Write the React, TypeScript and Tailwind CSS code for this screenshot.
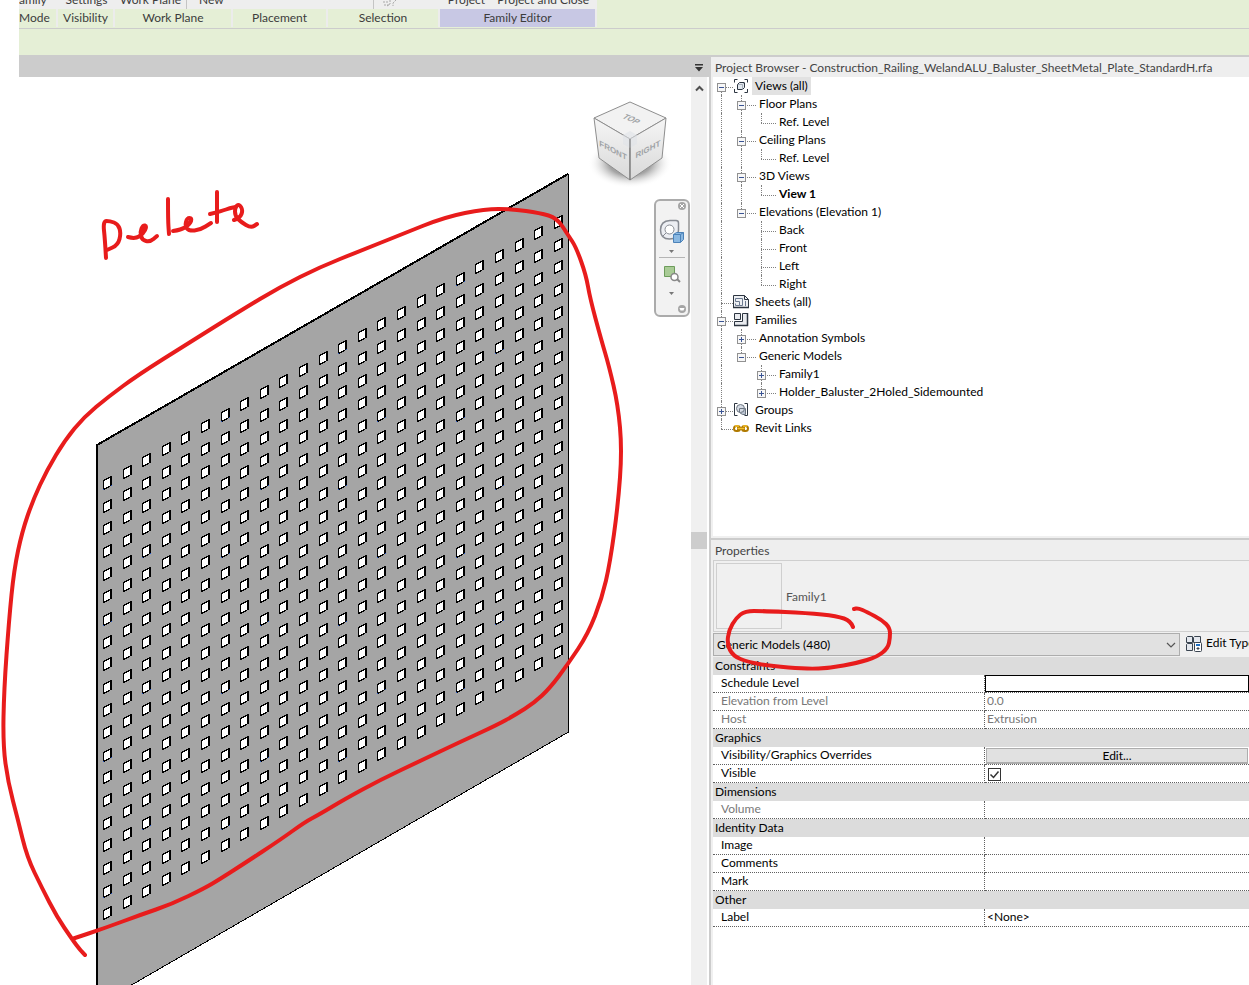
import type { ReactNode } from 'react';
import { useState } from 'react';

type Point = [number, number];

type TreeNode = {
  label: string;
  level: number;
  toggle?: 'open' | 'closed';
  icon?: ReactNode;
  guides?: boolean[];
  first?: boolean;
  last?: boolean;
  selected?: boolean;
  bold?: boolean;
};

type Property = {
  name: string;
  kind?: 'text' | 'input' | 'button' | 'checkbox';
  value?: string;
  readOnly?: boolean;
};

type PropertyGroup = {
  title: string;
  items: Property[];
};

// Runs a smooth curve through the midpoints of a pen stroke
const toPath = (points: Point[]) => {
  let d = `M${points[0][0]} ${points[0][1]}`;
  for (let i = 1; i < points.length - 1; i++) {
    const [x, y] = points[i];
    const [nx, ny] = points[i + 1];
    d += `Q${x} ${y} ${(x + nx) / 2} ${(y + ny) / 2}`;
  }
  const [lx, ly] = points[points.length - 1];
  return `${d}L${lx} ${ly}`;
};

const plateStrokes: Point[][] = [
  // loop round the holes
  [
    [85, 955], [80, 950], [72, 939], [57, 917], [42, 888], [27, 857], [18, 820],
    [8, 782], [3, 745], [4, 690], [9, 620], [14, 570], [22, 532], [33, 500],
    [47, 470], [65, 440], [84, 417], [108, 397], [138, 375], [187, 344],
    [240, 311], [280, 287], [320, 267], [360, 251], [400, 235], [445, 217],
    [485, 209], [512, 209], [540, 213], [557, 218], [568, 235], [576, 247],
    [586, 275], [590, 298], [601, 339], [609, 366], [618, 405], [622, 450],
    [618, 505], [610, 563], [602, 598], [588, 634], [568, 664], [550, 688],
    [534, 703], [515, 715], [497, 725], [460, 742], [420, 761], [380, 780],
    [345, 799], [320, 814], [305, 822], [280, 840], [245, 863], [220, 879],
    [205, 888], [172, 904], [140, 915], [105, 928], [72, 939],
  ],
  // Delete
  [[106, 258], [105, 240], [103, 221], [110, 221], [118, 224], [121, 233], [118, 245], [107, 250]],
  [[128, 237], [135, 239], [143, 234], [147, 226], [143, 225], [140, 232], [142, 240], [150, 242], [157, 236]],
  [[168, 199], [168, 220], [169, 234]],
  [[173, 231], [181, 230], [190, 224], [192, 218], [187, 218], [185, 226], [189, 231], [200, 230], [211, 223]],
  [[217, 192], [217, 210], [217, 222]],
  [[210, 214], [222, 211], [230, 208], [236, 207]],
  [[234, 220], [240, 218], [243, 210], [239, 204], [235, 207], [235, 216], [241, 222], [251, 228], [257, 224]],
];

const countStroke: Point[] = [
  [853, 627], [851, 621], [837, 616], [807, 613], [763, 611], [745, 611],
  [736, 618], [729, 630], [727, 644], [733, 656], [748, 662], [770, 666],
  [807, 669], [830, 668], [857, 663], [877, 657], [888, 648], [890, 638],
  [890, 628], [882, 620], [867, 612], [858, 608], [854, 609],
];

const holes = Array.from({ length: 480 }, (_, i) => {
  const col = i % 24;
  const row = Math.floor(i / 24);
  return {
    x: Math.round(103 + col * 19.6),
    y: Math.round(476 - col * 11.35 + row * 22.65),
    blue: (col * 7 + row * 5 + col * row) % 6 === 0,
  };
});

const ViewsIcon = () => (
  <svg width="16" height="16" viewBox="0 0 16 16" fill="none" stroke="#2c3540">
    <path d="M4.500 1.500h-3v3M11.500 1.500h3v3M1.500 11v3.500h3M14.500 11v3.500h-3" />
    <path d="M4.500 6.500l2-2h5v5l-2 2h-5z" fill="#e2e8ef" />
    <path d="M5 6.500h4.500v5M9.500 6.500l2-2" stroke="#a9b1bb" />
  </svg>
);

const SheetsIcon = () => (
  <svg width="16" height="16" viewBox="0 0 16 16" fill="none">
    <path d="M.5 1.500h11l4 4v8H.5z" fill="#eef0f3" stroke="#2c3540" />
    <path d="M0 13.500h16" stroke="#2c3540" strokeWidth="1.500" />
    <path d="M11.500 1.500v4h4" stroke="#2c3540" />
    <path d="M2.500 4.500h7v7h-3v-4h-4zM2.500 9.500v2h4M12.500 7v5" stroke="#6c7a90" />
  </svg>
);

const FamiliesIcon = () => (
  <svg width="16" height="16" viewBox="0 0 16 16" fill="#e9ebef" stroke="#2c3540">
    <path d="M1.500 1.500h6v6h-6zM9.500 1.500h5v12h-13v-4h8z" />
    <path d="M1 13.500h14M14.500 1v13" strokeWidth="1.500" />
  </svg>
);

const GroupsIcon = () => (
  <svg width="16" height="16" viewBox="0 0 16 16" fill="none" stroke="#2c3540">
    <path d="M4.500 1.500h-3v12h3M11.500 1.500h3v12h-3" />
    <path d="M6.500 6.500h6v6h-3l-3-2z" fill="#b9c2d0" stroke="#6c7682" />
    <circle cx="7.500" cy="6.500" r="4" fill="#d5dbe4" stroke="#6c7682" />
    <path d="M6.500 10v-3.500h4.500" stroke="#6c7682" />
  </svg>
);

const LinksIcon = () => (
  <svg width="16" height="16" viewBox="0 0 16 16" fill="none">
    <rect x="1" y="6" width="6" height="5" rx="2.500" stroke="#b07a00" strokeWidth="2" />
    <rect x="9" y="6" width="6" height="5" rx="2.500" stroke="#b07a00" strokeWidth="2" />
    <path d="M4 8.500h8" stroke="#b07a00" strokeWidth="3" />
    <path d="M2 6h4M10 6h4M4.500 8.500h7" stroke="#f3c02c" strokeWidth="1.500" />
  </svg>
);

const EditTypeIcon = () => (
  <svg width="17" height="17" viewBox="0 0 17 17" fill="#e4e8ee" stroke="#3a4450">
    <path d="M1.500 2.500l1-1h5v6h-6zM8.500 2.500l1-1h6v6h-7zM1.500 9.500l1-1h5v7h-6z" />
    <rect x="9.500" y="7.500" width="7" height="9" rx="1" fill="#fff" />
    <path d="M11 9h4v2h-4z" fill="#1d6fc4" stroke="none" />
    <path d="M11.500 13.500h3M13 12v3" />
  </svg>
);

const treeNodes: TreeNode[] = [
  { label: 'Views (all)', level: 0, toggle: 'open', icon: <ViewsIcon />, first: true, selected: true },
  { label: 'Floor Plans', level: 1, toggle: 'open', guides: [true] },
  { label: 'Ref. Level', level: 2, guides: [true, true], last: true },
  { label: 'Ceiling Plans', level: 1, toggle: 'open', guides: [true] },
  { label: 'Ref. Level', level: 2, guides: [true, true], last: true },
  { label: '3D Views', level: 1, toggle: 'open', guides: [true] },
  { label: 'View 1', level: 2, guides: [true, true], last: true, bold: true },
  { label: 'Elevations (Elevation 1)', level: 1, toggle: 'open', guides: [true], last: true },
  { label: 'Back', level: 2, guides: [true, false] },
  { label: 'Front', level: 2, guides: [true, false] },
  { label: 'Left', level: 2, guides: [true, false] },
  { label: 'Right', level: 2, guides: [true, false], last: true },
  { label: 'Sheets (all)', level: 0, icon: <SheetsIcon /> },
  { label: 'Families', level: 0, toggle: 'open', icon: <FamiliesIcon /> },
  { label: 'Annotation Symbols', level: 1, toggle: 'closed', guides: [true] },
  { label: 'Generic Models', level: 1, toggle: 'open', guides: [true], last: true },
  { label: 'Family1', level: 2, toggle: 'closed', guides: [true, false] },
  { label: 'Holder_Baluster_2Holed_Sidemounted', level: 2, toggle: 'closed', guides: [true, false], last: true },
  { label: 'Groups', level: 0, toggle: 'closed', icon: <GroupsIcon /> },
  { label: 'Revit Links', level: 0, icon: <LinksIcon />, last: true },
];

const propertyGroups: PropertyGroup[] = [
  {
    title: 'Constraints',
    items: [
      { name: 'Schedule Level', kind: 'input' },
      { name: 'Elevation from Level', value: '0.0', readOnly: true },
      { name: 'Host', value: 'Extrusion', readOnly: true },
    ],
  },
  {
    title: 'Graphics',
    items: [
      { name: 'Visibility/Graphics Overrides', kind: 'button', value: 'Edit...' },
      { name: 'Visible', kind: 'checkbox' },
    ],
  },
  { title: 'Dimensions', items: [{ name: 'Volume', readOnly: true }] },
  {
    title: 'Identity Data',
    items: [{ name: 'Image' }, { name: 'Comments' }, { name: 'Mark' }],
  },
  { title: 'Other', items: [{ name: 'Label', value: '<None>' }] },
];

const RibbonPanel = ({
  title,
  className,
  titleClassName = 'bg-[#e5efd6]',
  children,
}: {
  title: string;
  className: string;
  titleClassName?: string;
  children?: ReactNode;
}) => (
  <div className={`flex shrink-0 flex-col ${className}`}>
    <div className="flex h-[9px] items-end justify-center overflow-hidden whitespace-nowrap bg-[#eeeeee] leading-[18px]">
      {children}
    </div>
    <div className={`mr-[2px] h-[18px] text-center leading-[18px] ${titleClassName}`}>
      {title}
    </div>
  </div>
);

const Ribbon = () => (
  <header className="ml-[19px] bg-[#e5efd6] text-[#3c3c3c]">
    <div className="flex h-[29px] overflow-hidden border-b border-[#cccccc]">
      <div className="flex h-[27px] bg-[#ececec]">
        <RibbonPanel title="Mode" className="w-[39px] [&>div]:justify-start [&>div]:text-left">
          <span>amily</span>
        </RibbonPanel>
        <RibbonPanel title="Visibility" className="w-[57px]">
          Settings
        </RibbonPanel>
        <RibbonPanel title="Work Plane" className="w-[118px]">
          <span className="w-[72px] border-r border-[#c4c4c4] text-center">Work Plane</span>
          <span className="flex-1 pl-3">New</span>
        </RibbonPanel>
        <RibbonPanel title="Placement" className="w-[95px]" />
        <RibbonPanel title="Selection" className="w-[112px]">
          <span className="ml-1 h-full w-2 border-l border-[#c4c4c4]" />
          <svg width="18" height="9" viewBox="0 0 18 9" fill="none" stroke="#a8a8a8">
            <path d="M2 2h5M9 0v4l-3 2M15 0l-3 3v3M3 5h6" strokeDasharray="2 1" />
          </svg>
        </RibbonPanel>
        <RibbonPanel
          title="Family Editor"
          className="w-[157px]"
          titleClassName="bg-[#c8c8e4]"
        >
          <span className="mr-3">Project</span>
          <span>Project and Close</span>
        </RibbonPanel>
      </div>
    </div>
    <div className="h-[26px]" />
  </header>
);

const ViewCube = () => (
  <svg
    className="absolute top-4 right-[17px] h-[100px] w-[90px]"
    viewBox="584 93 90 100"
    role="img"
    aria-label="View cube"
  >
    <defs>
      <radialGradient id="cube-shadow">
        <stop offset="0.500" stopColor="#8c8c8c" stopOpacity="0.800" />
        <stop offset="1" stopColor="#ffffff" stopOpacity="0" />
      </radialGradient>
      <linearGradient id="cube-face" x2="0" y2="1">
        <stop offset="0" stopColor="#f5f5f5" />
        <stop offset="1" stopColor="#d9d9d9" />
      </linearGradient>
    </defs>
    <ellipse cx="630" cy="163" rx="42" ry="25" fill="url(#cube-shadow)" />
    <g stroke="#8e8e8e" strokeLinejoin="round">
      <path d="M630 102l36 16-36 21-36-21z" fill="#f2f2f2" />
      <path d="M594 118l36 21v41l-31-22z" fill="url(#cube-face)" />
      <path d="M666 118l-36 21v41l32-22z" fill="url(#cube-face)" />
    </g>
    <path d="M623 135l7-4 7 4v9l-7 4-7-4z" fill="#dfe3e8" opacity="0.600" />
    <path d="M630 139v41" stroke="#777" />
    <g
      fill="#a0a3a6"
      fontFamily="Liberation Sans, sans-serif"
      fontSize="8"
      fontWeight="700"
      textAnchor="middle"
    >
      <text transform="translate(629 121) rotate(24) skewX(-28)">TOP</text>
      <text transform="translate(613 153) skewY(28)">FRONT</text>
      <text transform="translate(648 152) skewY(-28)">RIGHT</text>
    </g>
  </svg>
);

const NavigationBar = () => (
  <div className="absolute top-[122px] right-[1px] flex h-[118px] w-[36px] flex-col items-center rounded-md border-2 border-[#ababab] bg-[#f2f2f2]">
    <svg width="32" height="114" viewBox="656 201 32 114" fill="none">
      <circle cx="682" cy="206" r="4" fill="#a5a5a5" />
      <path d="M680 204l4 4M684 204l-4 4" stroke="#fff" />
      <path
        d="M670 220.500h6q2.500 0 2.500 2.500v7q0 9-9 9t-9-9 9.500-9.500z"
        fill="#eceef3"
        stroke="#878b93"
        strokeWidth="1.500"
      />
      <circle cx="669.500" cy="229.500" r="4.500" fill="#fff" stroke="#878b93" />
      <path d="M662 237l4-4" stroke="#878b93" />
      <path d="M673.500 234.500l3-2h7v7l-3 3h-7z" fill="#8ab8e2" stroke="#4c82b8" />
      <path d="M673.500 234.500h7v8M680.500 234.500l3-2" stroke="#4c82b8" />
      <path d="M669 250h5l-2.500 3z" fill="#777" />
      <path d="M659 257.500h26" stroke="#b5b5b5" />
      <path d="M664.500 266.500h10v10h-10z" fill="#a9cb96" stroke="#6d9c5b" />
      <circle cx="674.500" cy="277" r="3.500" fill="#fff" stroke="#888" strokeWidth="1.500" />
      <path d="M677 279l3 3" stroke="#888" strokeWidth="2" />
      <path d="M669 292h5l-2.500 3z" fill="#777" />
      <circle cx="682" cy="309" r="4" fill="#a5a5a5" />
      <path d="M679.500 308h5l-1 2.500h-3z" fill="#fff" />
    </svg>
  </div>
);

const Drawing = () => (
  <svg
    className="absolute top-0 left-0 h-[908px] w-[691px]"
    viewBox="0 77 691 908"
    role="img"
    aria-label="Baluster plate"
  >
    <g shapeRendering="crispEdges">
      <path d="M97 445L568 174V732L97 1005z" fill="#a5a5a5" />
      <path d="M97 1005V445L568 174" fill="none" stroke="#000" strokeWidth="2" />
      <path d="M568.500 174V732L97 1005" fill="none" stroke="#000" />
      {holes.map(({ x, y, blue }) => (
        <g key={`${x}-${y}`} transform={`translate(${x} ${y})`}>
          <path d="M0 4h1V3h2V2h2V1h2V0h2v10H7v1H6v1H4v1H2v1H0z" fill="#000" />
          <path d="M1 5h1V4h2V3h2V2h1v8H5v1H3v1H1z" fill="#fff" />
          {blue && <path d="M0 13h1v1H0zM8 9h1v1H8z" fill="#2456c8" />}
        </g>
      ))}
    </g>
    <g fill="none" stroke="#e81c1c" strokeWidth="4" strokeLinecap="round" strokeLinejoin="round">
      {plateStrokes.map((stroke, i) => (
        <path key={i} d={toPath(stroke)} />
      ))}
    </g>
  </svg>
);

const Viewport = () => (
  <main className="flex min-w-0 flex-1 flex-col">
    <div className="ml-[19px] flex h-[22px] items-center justify-end bg-[#cccccc] pr-[5px]">
      <button type="button" aria-label="Open views" className="pt-1">
        <svg width="10" height="8" viewBox="0 0 10 8">
          <path d="M1 0h8v1.500H1zM1 3h8L5 7.500z" fill="#333" />
        </svg>
      </button>
    </div>
    <div className="flex flex-1 bg-white pr-[2px]">
      <div className="relative flex-1 overflow-hidden">
        <Drawing />
        <ViewCube />
        <NavigationBar />
      </div>
      <div className="flex w-4 flex-col items-center bg-[#f0f0f0]">
        <button type="button" aria-label="Scroll up" className="flex h-[22px] items-center">
          <svg width="9" height="7" viewBox="0 0 9 7" fill="none">
            <path d="M1 5.500l3.500-3.500 3.500 3.500" stroke="#505050" strokeWidth="2" />
          </svg>
        </button>
        <div className="mt-[433px] h-[17px] w-full bg-[#cdcdcd]" />
      </div>
    </div>
  </main>
);

const TreeRow = ({ node }: { node: TreeNode }) => {
  const { label, level, toggle, icon, guides = [], first, last, selected, bold } = node;

  return (
    <li className="flex h-[18px] items-center whitespace-nowrap">
      {guides.map((visible, i) => (
        <span key={i} className="flex h-full w-5 shrink-0 pl-2">
          {visible && <span className="border-l border-dotted border-[#808080]" />}
        </span>
      ))}
      <span className={`relative h-full shrink-0 ${level === 0 ? 'w-5' : 'w-[26px]'}`}>
        <span
          className={`absolute left-2 border-l border-dotted border-[#808080] ${
            first ? 'top-[10px] bottom-0' : last ? 'top-0 h-[10px]' : 'inset-y-0'
          }`}
        />
        <span
          className={`absolute top-[10px] left-2 border-t border-dotted border-[#808080] ${
            level === 0 ? 'right-0' : 'right-[3px]'
          }`}
        />
        {toggle && (
          <button
            type="button"
            aria-label={label}
            aria-expanded={toggle === 'open'}
            className="absolute top-[6px] left-1 flex size-[9px] items-center justify-center border border-[#919191] bg-[#f7f7f7]"
          >
            <svg width="5" height="5" viewBox="0 0 5 5" shapeRendering="crispEdges">
              <path
                d={toggle === 'open' ? 'M0 2h5v1H0z' : 'M0 2h5v1H0zM2 0h1v5H2z'}
                fill="#3a5494"
              />
            </svg>
          </button>
        )}
      </span>
      {icon}
      <span
        className={`${icon ? 'ml-[3px] px-[3px]' : ''} ${bold ? 'font-bold' : ''} ${
          selected ? 'bg-[#e2e2e2]' : ''
        }`}
      >
        {label}
      </span>
    </li>
  );
};

const ProjectBrowser = () => (
  <section>
    <h2 className="h-5 overflow-hidden bg-[#eeeeee] pl-1 leading-[22px] whitespace-nowrap text-[#444444]">
      Project Browser - Construction_Railing_WelandALU_Baluster_SheetMetal_Plate_StandardH.rfa
    </h2>
    <ul className="ml-[2px] h-[459px] overflow-hidden bg-white">
      {treeNodes.map((node, i) => (
        <TreeRow key={i} node={node} />
      ))}
    </ul>
  </section>
);

const PropertyValue = ({ item, id }: { item: Property; id: string }) => {
  const [checked, setChecked] = useState(true);

  if (item.kind === 'input') {
    return <input id={id} className="block h-[17px] w-full border border-black bg-white px-1" />;
  }
  if (item.kind === 'button') {
    return (
      <button
        id={id}
        type="button"
        className="mx-px mt-px block h-4 w-[calc(100%-2px)] border border-b-2 border-[#adadad] bg-[#e1e1e1] leading-[14px]"
      >
        {item.value}
      </button>
    );
  }
  if (item.kind === 'checkbox') {
    return (
      <span className="relative mt-[3px] ml-[3px] block size-[13px]">
        <input
          id={id}
          type="checkbox"
          checked={checked}
          onChange={(ev) => setChecked(ev.target.checked)}
          className="block size-[13px] appearance-none border border-[#333333] bg-white"
        />
        {checked && (
          <svg
            className="pointer-events-none absolute inset-0"
            width="13"
            height="13"
            viewBox="0 0 13 13"
            fill="none"
          >
            <path d="M2.500 6.500l3 3 5-6" stroke="#333" strokeWidth="1.500" />
          </svg>
        )}
      </span>
    );
  }
  return <span className="block pl-[2px] leading-4">{item.value}</span>;
};

const Properties = () => (
  <section className="relative flex flex-1 flex-col border-t-2 border-[#cccccc] bg-[#f0f0f0]">
    <h2 className="h-5 bg-[#eeeeee] pl-1 leading-[22px] text-[#444444]">Properties</h2>
    <div className="ml-[2px] flex flex-1 flex-col">
      <div className="flex h-[72px] items-center gap-1 border-y border-l border-[#cfcfcf] pl-[2px] text-[#555555]">
        <div className="size-[66px] border border-[#cfcfcf]" />
        <span className="pt-[2px]">Family1</span>
      </div>
      <div className="flex h-[25px] items-start overflow-hidden pt-px">
        <div className="relative w-[467px] shrink-0">
          <select
            aria-label="Category"
            className="block h-[23px] w-full appearance-none border border-[#adadad] bg-[#e1e1e1] pl-[3px]"
          >
            <option>Generic Models (480)</option>
          </select>
          <svg
            className="pointer-events-none absolute top-[9px] right-1"
            width="10"
            height="7"
            viewBox="0 0 10 7"
            fill="none"
          >
            <path d="M1 1l4 4 4-4" stroke="#555" strokeWidth="1.200" />
          </svg>
        </div>
        <button type="button" className="ml-[5px] flex h-5 items-center gap-1 whitespace-nowrap">
          <EditTypeIcon />
          Edit Type
        </button>
      </div>
      <div className="flex-1 bg-white">
        <table className="w-full table-fixed border-separate border-spacing-0">
          <colgroup>
            <col className="w-[272px]" />
            <col />
          </colgroup>
          {propertyGroups.map((group) => (
            <tbody key={group.title}>
              <tr className="h-[18px]">
                <th
                  colSpan={2}
                  className="bg-[#dcdcdc] p-0 pl-[2px] text-left leading-[18px] font-normal"
                >
                  {group.title}
                </th>
              </tr>
              {group.items.map((item) => {
                const id = item.name.toLowerCase().replace(/\W+/g, '-');
                return (
                  <tr
                    key={item.name}
                    className={`h-[18px] align-top ${item.readOnly ? 'text-[#787878]' : ''}`}
                  >
                    <td className="border-r border-b border-dotted border-[#606060] p-0 pl-2 leading-4">
                      {item.kind ? <label htmlFor={id}>{item.name}</label> : item.name}
                    </td>
                    <td className="border-b border-dotted border-[#606060] p-0">
                      <PropertyValue item={item} id={id} />
                    </td>
                  </tr>
                );
              })}
            </tbody>
          ))}
        </table>
      </div>
    </div>
    <svg
      className="pointer-events-none absolute top-0 left-0 h-[140px] w-[200px]"
      viewBox="711 540 200 140"
      fill="none"
    >
      <path
        d={toPath(countStroke)}
        stroke="#e81c1c"
        strokeWidth="4"
        strokeLinecap="round"
        strokeLinejoin="round"
      />
    </svg>
  </section>
);

const App = () => (
  <div className="flex min-h-screen flex-col overflow-hidden bg-white font-[Lato,sans-serif] text-[12px] leading-[18px] text-black">
    <Ribbon />
    <div className="flex flex-1">
      <Viewport />
      <aside className="flex w-[540px] shrink-0 flex-col border-t-2 border-l-2 border-[#cccccc] bg-[#f0f0f0]">
        <ProjectBrowser />
        <div className="h-[2px]" />
        <Properties />
      </aside>
    </div>
  </div>
);

export default App;
